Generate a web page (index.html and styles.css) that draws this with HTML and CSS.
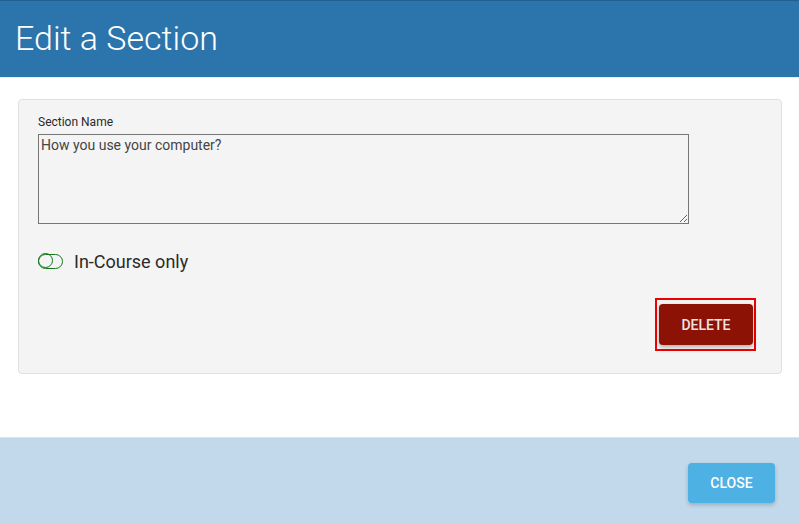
FILE: index.html
```html
<!DOCTYPE html>
<html>
<head>
<meta charset="utf-8">
<link rel="stylesheet" href="styles.css">
</head>
<body>
<div class="modal">
  <header class="modal-header">
    <h1 class="title">Edit a Section</h1>
  </header>
  <main class="modal-body">
    <div class="card">
      <label class="field-label" for="name">Section Name</label>
      <textarea id="name" class="field-input">How you use your computer?</textarea>
      <div class="toggle-row">
        <span class="toggle"><span class="knob"></span></span>
        <span class="toggle-label">In-Course only</span>
      </div>
      <div class="actions">
        <span class="focus-ring"><button class="btn btn-delete">DELETE</button></span>
      </div>
    </div>
  </main>
  <footer class="modal-footer">
    <button class="btn btn-close">CLOSE</button>
  </footer>
</div>
</body>
</html>
```

FILE: styles.css
```css
html, body {
  margin: 0;
  padding: 0;
  background: #ffffff;
  font-family: Roboto, "Liberation Sans", sans-serif;
}
.modal {
  width: 799px;
  height: 524px;
  display: flex;
  flex-direction: column;
}
.modal-header {
  height: 78px;
  background: #2c74ac;
  border-top: 1px solid #1f5f91;
  box-sizing: border-box;
  border-bottom: 1px solid #e6ecf1;
  display: flex;
  align-items: center;
  padding-left: 15px;
}
.title {
  margin: 0;
  font-weight: 300;
  font-size: 34px;
  color: #ffffff;
  line-height: 1;
  padding-bottom: 2px;
}
.modal-body {
  flex: 1;
  padding: 21px 17px 0 18px;
}
.card {
  background: #f4f4f4;
  border: 1px solid #e0e0e0;
  border-radius: 4px;
  padding: 15px 25px 22px 19px;
  height: 275px;
  box-sizing: border-box;
  display: flex;
  flex-direction: column;
}
.field-label {
  font-size: 12px;
  font-weight: 400;
  color: #2a2a2a;
  line-height: 14px;
  margin-bottom: 5px;
}
.field-input {
  width: 651px;
  height: 90px;
  box-sizing: border-box;
  border: 1px solid #767676;
  background: #f4f4f4;
  font-family: Roboto, "Liberation Sans", sans-serif;
  font-size: 14px;
  color: #444;
  padding: 2px 2px;
  margin: 0;
  resize: both;
}
.toggle-row {
  display: flex;
  align-items: center;
  margin-top: 25px;
  height: 24px;
}
.toggle {
  width: 25px;
  height: 15px;
  box-sizing: border-box;
  border: 1.5px solid #16761a;
  border-radius: 8px;
  position: relative;
  margin-right: 11px;
}
.knob {
  position: absolute;
  left: -1.5px;
  top: -1.5px;
  width: 15px;
  height: 15px;
  box-sizing: border-box;
  border: 1.5px solid #16761a;
  border-radius: 50%;
}
.toggle-label {
  font-size: 18px;
  color: #2a2a2a;
}
.actions {
  margin-top: auto;
  display: flex;
  justify-content: flex-end;
}
.focus-ring {
  display: inline-flex;
  border: 2px solid #ee0000;
  padding: 4px 1px 4px 2px;
}
.btn {
  border: none;
  font-family: Roboto, "Liberation Sans", sans-serif;
  font-weight: 500;
  font-size: 14px;
  color: #fff;
  border-radius: 4px;
  cursor: pointer;
}
.btn-delete {
  width: 94px;
  height: 41px;
  background: #8c1205;
  box-shadow: 0 2px 4px rgba(0,0,0,0.3);
  font-size: 14px;
  color: #f3e3e3;
}
.modal-footer {
  height: 87px;
  background: #c2d8eb;
  border-top: 1px solid #d7e3ee;
  box-sizing: border-box;
  display: flex;
  justify-content: flex-end;
  padding: 25px 24px 0 0;
  align-items: flex-start;
}
.btn-close {
  width: 87px;
  height: 40px;
  background: #4db1e3;
  box-shadow: 0 2px 4px rgba(0,0,0,0.2);
}
```
